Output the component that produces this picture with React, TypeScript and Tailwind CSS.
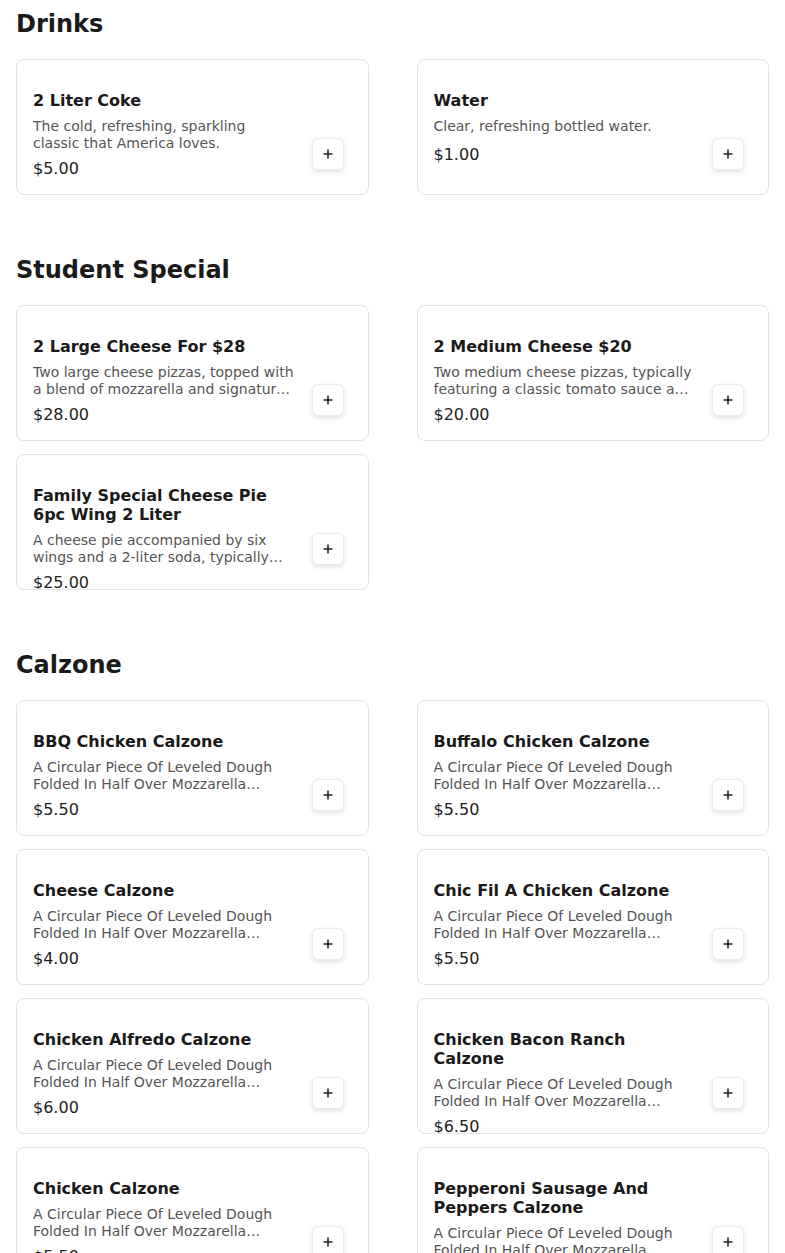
import React from 'react'

type Item = { name: string; description: string; price: string }

const calzoneDesc =
  'A Circular Piece Of Leveled Dough Folded In Half Over Mozzarella Cheese And Baked Until Golden Brown.'

const sections: { title: string; items: Item[] }[] = [
  {
    title: 'Drinks',
    items: [
      { name: '2 Liter Coke', description: 'The cold, refreshing, sparkling classic that America loves.', price: '$5.00' },
      { name: 'Water', description: 'Clear, refreshing bottled water.', price: '$1.00' }
    ]
  },
  {
    title: 'Student Special',
    items: [
      {
        name: '2 Large Cheese For $28',
        description: 'Two large cheese pizzas, topped with a blend of mozzarella and signature tomato sauce.',
        price: '$28.00'
      },
      {
        name: '2 Medium Cheese $20',
        description: 'Two medium cheese pizzas, typically featuring a classic tomato sauce and mozzarella cheese.',
        price: '$20.00'
      },
      {
        name: 'Family Special Cheese Pie 6pc Wing 2 Liter',
        description: 'A cheese pie accompanied by six wings and a 2-liter soda, typically enjoyed by the whole family.',
        price: '$25.00'
      }
    ]
  },
  {
    title: 'Calzone',
    items: [
      { name: 'BBQ Chicken Calzone', description: calzoneDesc, price: '$5.50' },
      { name: 'Buffalo Chicken Calzone', description: calzoneDesc, price: '$5.50' },
      { name: 'Cheese Calzone', description: calzoneDesc, price: '$4.00' },
      { name: 'Chic Fil A Chicken Calzone', description: calzoneDesc, price: '$5.50' },
      { name: 'Chicken Alfredo Calzone', description: calzoneDesc, price: '$6.00' },
      { name: 'Chicken Bacon Ranch Calzone', description: calzoneDesc, price: '$6.50' },
      { name: 'Chicken Calzone', description: calzoneDesc, price: '$5.50' },
      { name: 'Pepperoni Sausage And Peppers Calzone', description: calzoneDesc, price: '$5.50' }
    ]
  }
]

function PlusIcon() {
  return (
    <svg width="10" height="10" viewBox="0 0 10 10" fill="none" stroke="#222" strokeWidth="1.6">
      <path d="M5 0.5v9M0.5 5h9" />
    </svg>
  )
}

function MenuCard({ item }: { item: Item }) {
  return (
    <div className="flex h-[136px] gap-4 overflow-hidden rounded-lg border border-[#e3e3e3] bg-white pl-4 pr-6 pt-[31px]">
      <div className="min-w-0 flex-1">
        <h3 className="text-base font-bold leading-[19px] text-[#1a1a1a]">{item.name}</h3>
        <p className="mt-2 line-clamp-2 min-h-[20px] text-sm leading-[17px] text-[#555]">{item.description}</p>
        <div className="mt-[5px] text-base leading-6 text-[#222]">{item.price}</div>
      </div>
      <div className="shrink-0 pt-[47px]">
        <button className="flex h-8 w-8 items-center justify-center rounded-md border border-[#ececec] bg-white shadow-[0_2px_5px_rgba(0,0,0,0.12)]">
          <PlusIcon />
        </button>
      </div>
    </div>
  )
}

export default function App() {
  return (
    <div className="min-h-screen bg-white px-4 font-['DejaVu_Sans',sans-serif]">
      {sections.map((section) => (
        <section key={section.title} className="pb-[51px] pt-2">
          <h2 className="mb-[19px] text-2xl font-bold leading-8 text-[#1a1a1a]">{section.title}</h2>
          <div className="grid grid-cols-2 gap-x-12 gap-y-[13px]">
            {section.items.map((item) => (
              <MenuCard key={item.name} item={item} />
            ))}
          </div>
        </section>
      ))}
    </div>
  )
}
